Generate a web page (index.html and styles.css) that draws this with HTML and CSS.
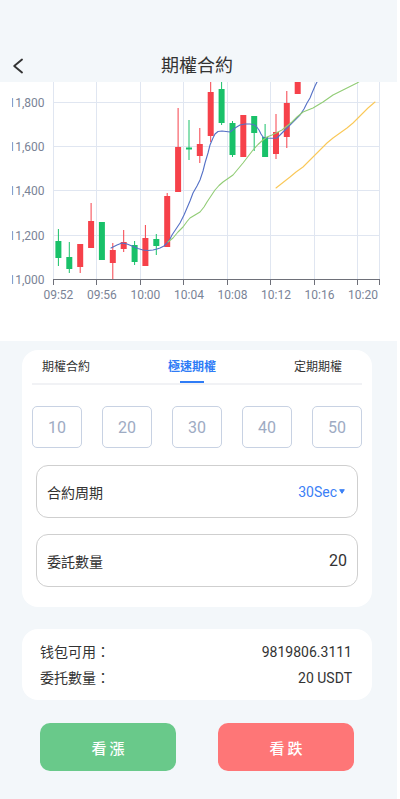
FILE: index.html
```html
<!DOCTYPE html>
<html lang="zh-Hant">
<head>
<meta charset="utf-8">
<meta name="viewport" content="width=device-width, initial-scale=1">
<title>期權合約</title>
<link rel="stylesheet" href="styles.css">
</head>
<body>
<div class="app">
  <header class="header">
    <div class="back">
      <svg width="12" height="16" viewBox="0 0 12 16"><path d="M10 1.5 L2.2 8 L10 14.5" fill="none" stroke="#333" stroke-width="1.9" stroke-linecap="round" stroke-linejoin="round"/></svg>
    </div>
    <h1 class="title">期權合約</h1>
    <div></div>
  </header>

  <section class="chart">
    <svg class="kline" viewBox="0 82 397 259" width="397" height="259">
      <defs><clipPath id="clip"><rect x="12" y="82" width="385" height="259"/></clipPath></defs>
      <g clip-path="url(#clip)">
        <g class="grid">
          <line x1="53" y1="58.5" x2="380" y2="58.5"/>
          <line x1="53" y1="102.5" x2="380" y2="102.5"/>
          <line x1="53" y1="146.5" x2="380" y2="146.5"/>
          <line x1="53" y1="190.5" x2="380" y2="190.5"/>
          <line x1="53" y1="235.5" x2="380" y2="235.5"/>
          <line x1="53.5" y1="58" x2="53.5" y2="279"/>
          <line x1="96.5" y1="58" x2="96.5" y2="279"/>
          <line x1="140.5" y1="58" x2="140.5" y2="279"/>
          <line x1="183.5" y1="58" x2="183.5" y2="279"/>
          <line x1="227.5" y1="58" x2="227.5" y2="279"/>
          <line x1="270.5" y1="58" x2="270.5" y2="279"/>
          <line x1="314.5" y1="58" x2="314.5" y2="279"/>
          <line x1="357.5" y1="58" x2="357.5" y2="279"/>
          <line x1="379.5" y1="58" x2="379.5" y2="279"/>
        </g>
        <g class="axis">
          <line x1="53" y1="279.5" x2="380" y2="279.5"/>
          <line x1="53.5" y1="279" x2="53.5" y2="285"/>
          <line x1="96.5" y1="279" x2="96.5" y2="285"/>
          <line x1="140.5" y1="279" x2="140.5" y2="285"/>
          <line x1="183.5" y1="279" x2="183.5" y2="285"/>
          <line x1="227.5" y1="279" x2="227.5" y2="285"/>
          <line x1="270.5" y1="279" x2="270.5" y2="285"/>
          <line x1="314.5" y1="279" x2="314.5" y2="285"/>
          <line x1="357.5" y1="279" x2="357.5" y2="285"/>
          <line x1="379.5" y1="279" x2="379.5" y2="285"/>
        </g>
        <g class="ylabels">
          <text x="44.5" y="106.8">11,800</text>
          <text x="44.5" y="150.8">11,600</text>
          <text x="44.5" y="194.8">11,400</text>
          <text x="44.5" y="239.8">11,200</text>
          <text x="44.5" y="283.8">11,000</text>
        </g>
        <g class="xlabels">
          <text x="58.4" y="298.5">09:52</text>
          <text x="101.9" y="298.5">09:56</text>
          <text x="145.4" y="298.5">10:00</text>
          <text x="189" y="298.5">10:04</text>
          <text x="232.5" y="298.5">10:08</text>
          <text x="276" y="298.5">10:12</text>
          <text x="319.5" y="298.5">10:16</text>
          <text x="363" y="298.5">10:20</text>
        </g>
        <g class="up">
          <line x1="58.4" y1="229" x2="58.4" y2="266"/><rect x="55.4" y="241" width="6" height="17"/>
          <line x1="69.3" y1="242" x2="69.3" y2="273"/><rect x="66.3" y="257" width="6" height="12"/>
          <rect x="98.9" y="222" width="6" height="38"/>
          <line x1="134.6" y1="241" x2="134.6" y2="265"/><rect x="131.6" y="245" width="6" height="17"/>
          <line x1="156.3" y1="234" x2="156.3" y2="255"/><rect x="153.3" y="239" width="6" height="7"/>
          <line x1="189" y1="120" x2="189" y2="160"/><rect x="186" y="147.5" width="6" height="2"/>
          <line x1="221.6" y1="75" x2="221.6" y2="125"/><rect x="218.6" y="89" width="6" height="34"/>
          <line x1="232.5" y1="121" x2="232.5" y2="157"/><rect x="229.5" y="123" width="6" height="32"/>
          <line x1="254.2" y1="116" x2="254.2" y2="151"/><rect x="251.2" y="116" width="6" height="17"/>
          <line x1="265.1" y1="124" x2="265.1" y2="157"/><rect x="262.1" y="137" width="6" height="20"/>
        </g>
        <g class="down">
          <line x1="80.2" y1="244" x2="80.2" y2="273"/><rect x="77.2" y="244" width="6" height="23"/>
          <line x1="91.1" y1="203" x2="91.1" y2="248"/><rect x="88.1" y="221" width="6" height="27"/>
          <line x1="112.8" y1="243" x2="112.8" y2="279"/><rect x="109.8" y="250" width="6" height="13"/>
          <line x1="123.7" y1="230" x2="123.7" y2="252"/><rect x="120.7" y="242" width="6" height="7"/>
          <line x1="145.4" y1="225" x2="145.4" y2="266"/><rect x="142.4" y="238" width="6" height="28"/>
          <line x1="167.2" y1="193" x2="167.2" y2="247"/><rect x="164.2" y="196" width="6" height="51"/>
          <line x1="178.1" y1="108" x2="178.1" y2="192"/><rect x="175.1" y="147" width="6" height="45"/>
          <line x1="199.8" y1="128" x2="199.8" y2="163"/><rect x="196.8" y="144" width="6" height="12"/>
          <line x1="210.7" y1="75" x2="210.7" y2="142"/><rect x="207.7" y="92" width="6" height="44"/>
          <rect x="240.3" y="115" width="6" height="42"/>
          <line x1="276" y1="114" x2="276" y2="159"/><rect x="273" y="132" width="6" height="22"/>
          <line x1="286.8" y1="91" x2="286.8" y2="148"/><rect x="283.8" y="103" width="6" height="34"/>
          <line x1="297.7" y1="70" x2="297.7" y2="94"/><rect x="294.7" y="75" width="6" height="19"/>
        </g>
        <polyline class="ma ma-blue" points="111,248 117,245 122,243 127,244 132,246 138,248.5 143,250 148,250.5 153,250 157,249 160,248 164,246 167,243 170,239 172,235 176,229 180,223 184,215 187,208 190,201 193,193 197,186 200,180 203,171 205,163 208,153 210,145 213,138 215,134 218,131.5 222,131 226,131.5 230,132 235,128 240,125 245,124 250,124 253,124.5 256,126 259,130 261,134 263,137 266,138 272,138.2 277,138 280,135 283,132 287,128 290,125 295,120 300,115 304,109 307,103 310,98 312,93 315,86 317,82 320,75"/>
        <polyline class="ma ma-green" points="168,242 173,238 178,232 183,227 187,221.5 190,218 195,215 200,212 204,207 207,202 211,196 215,190 219,185.5 223,182 228,178.5 233,175 238,169 243,163 248,156.5 253,150 258,144.5 263,140 267,137 272,135 277,132.5 282,130 287,126 292,122 297,117 303,112 308,110 313,108 318,105 323,102 328,98.5 333,95 338,92.5 343,90 348,87.5 353,85 357,83 360,81 364,79"/>
        <polyline class="ma ma-yellow" points="276,188 283,182.5 290,177 296,172 303,167 310,160 317,153 322,148 327,143 333,138 340,133 347,128 353,123 358,118 363,113 368,108 375,102"/>
      </g>
    </svg>
  </section>

  <section class="trade-card">
    <nav class="tabs">
      <span class="tab">期權合約</span>
      <span class="tab active">極速期權</span>
      <span class="tab">定期期權</span>
    </nav>
    <div class="amounts">
      <span class="amount">10</span>
      <span class="amount">20</span>
      <span class="amount">30</span>
      <span class="amount">40</span>
      <span class="amount">50</span>
    </div>
    <div class="field">
      <span class="field-label">合約周期</span>
      <span class="field-select">30Sec<svg class="caret" width="6" height="5" viewBox="0 0 6 5"><path d="M0.7 0.7 H5.3 L3 4.3 Z" fill="#3b80f6" stroke="#3b80f6" stroke-width="1" stroke-linejoin="round"/></svg></span>
    </div>
    <div class="field">
      <span class="field-label">委託數量</span>
      <span class="field-num">20</span>
    </div>
  </section>

  <section class="info-card">
    <div class="info-row"><span>钱包可用：</span><span>9819806.3111</span></div>
    <div class="info-row"><span>委托數量：</span><span>20 USDT</span></div>
  </section>

  <div class="actions">
    <button class="btn btn-up">看漲</button>
    <button class="btn btn-down">看跌</button>
  </div>
</div>
</body>
</html>
```

FILE: styles.css
```css
* {
  box-sizing: border-box;
  margin: 0;
  padding: 0;
}

body {
  margin: 0;
  background: #ffffff;
  font-family: Roboto, "Noto Sans CJK TC", sans-serif;
  color: #333333;
}

.app {
  width: 397px;
  min-height: 799px;
  background: #f3f7fa;
  overflow: hidden;
}

.header {
  height: 82px;
  display: grid;
  grid-template-columns: 40px 1fr 40px;
  align-items: end;
}

.back {
  height: 32px;
  display: flex;
  align-items: center;
  padding-left: 12px;
}

.back svg {
  display: block;
}

.title {
  font-size: 18px;
  font-weight: 400;
  line-height: 32px;
  text-align: center;
  color: #333333;
  padding-right: 3px;
}

.chart {
  height: 259px;
  background: #ffffff;
}

.kline {
  display: block;
}

.kline .grid line {
  stroke: #e0e6f1;
  stroke-width: 1;
}

.kline .axis line {
  stroke: #6e7079;
  stroke-width: 1;
}

.kline text {
  font-family: Roboto, sans-serif;
  font-size: 12px;
  fill: #7a8396;
}

.kline .ylabels text {
  text-anchor: end;
}

.kline .xlabels text {
  text-anchor: middle;
}

.kline .up line {
  stroke: #19c169;
  stroke-width: 1;
}

.kline .up rect {
  fill: #19c169;
}

.kline .down line {
  stroke: #f6414a;
  stroke-width: 1;
}

.kline .down rect {
  fill: #f6414a;
}

.kline .ma {
  fill: none;
  stroke-width: 1.1;
  stroke-linejoin: round;
  stroke-linecap: round;
}

.kline .ma-blue {
  stroke: #5470c6;
}

.kline .ma-green {
  stroke: #91cc75;
}

.kline .ma-yellow {
  stroke: #fac858;
}

.trade-card {
  width: 350px;
  margin: 9px 0 0 22px;
  background: #ffffff;
  border-radius: 16px;
  padding: 8px 0 20px;
}

.tabs {
  display: flex;
  justify-content: space-between;
  margin: 0 10px;
  padding: 0 20px 0 10px;
  border-bottom: 2px solid #f1f2f5;
}

.tab {
  display: flex;
  flex-direction: column;
  align-items: center;
  font-size: 12px;
  line-height: 18px;
  color: #333333;
}

.tab::after {
  content: "";
  width: 24px;
  height: 2px;
  margin-top: 5px;
  background: transparent;
}

.tab.active {
  color: #2f7cf6;
  font-weight: 700;
}

.tab.active::after {
  background: #2f7cf6;
}

.amounts {
  display: flex;
  gap: 20px;
  margin: 21px 10px 0;
}

.amount {
  width: 50px;
  height: 42px;
  border: 1px solid #c8d2e3;
  border-radius: 5px;
  display: flex;
  align-items: center;
  justify-content: center;
  font-size: 16px;
  color: #9eabc3;
}

.field {
  height: 53px;
  margin: 17px 14px 0;
  border: 1px solid #cfcfcf;
  border-radius: 12px;
  display: flex;
  align-items: center;
  justify-content: space-between;
  padding: 0 10px;
}

.field + .field {
  margin-top: 16px;
}

.field-label {
  font-size: 14px;
  color: #333333;
}

.field-select {
  display: flex;
  align-items: center;
  font-size: 14px;
  color: #3b80f6;
}

.caret {
  display: block;
  margin: 0 2px 0 2px;
}

.field-num {
  font-size: 16px;
  color: #333333;
}

.info-card {
  width: 350px;
  margin: 22px 0 0 22px;
  background: #ffffff;
  border-radius: 16px;
  padding: 10px 20px 9px 18px;
}

.info-row {
  display: flex;
  justify-content: space-between;
  font-size: 14px;
  line-height: 26px;
  color: #333333;
}

.actions {
  display: flex;
  gap: 42px;
  margin: 23px 0 0 40px;
}

.btn {
  width: 136px;
  height: 48px;
  border: none;
  border-radius: 10px;
  color: #ffffff;
  font-family: Roboto, "Noto Sans CJK TC", sans-serif;
  font-size: 15px;
  font-weight: 500;
  letter-spacing: 3px;
  padding-left: 3px;
  display: flex;
  align-items: center;
  justify-content: center;
}

.btn-up {
  background: #69c98a;
}

.btn-down {
  background: #fe7677;
}
```
